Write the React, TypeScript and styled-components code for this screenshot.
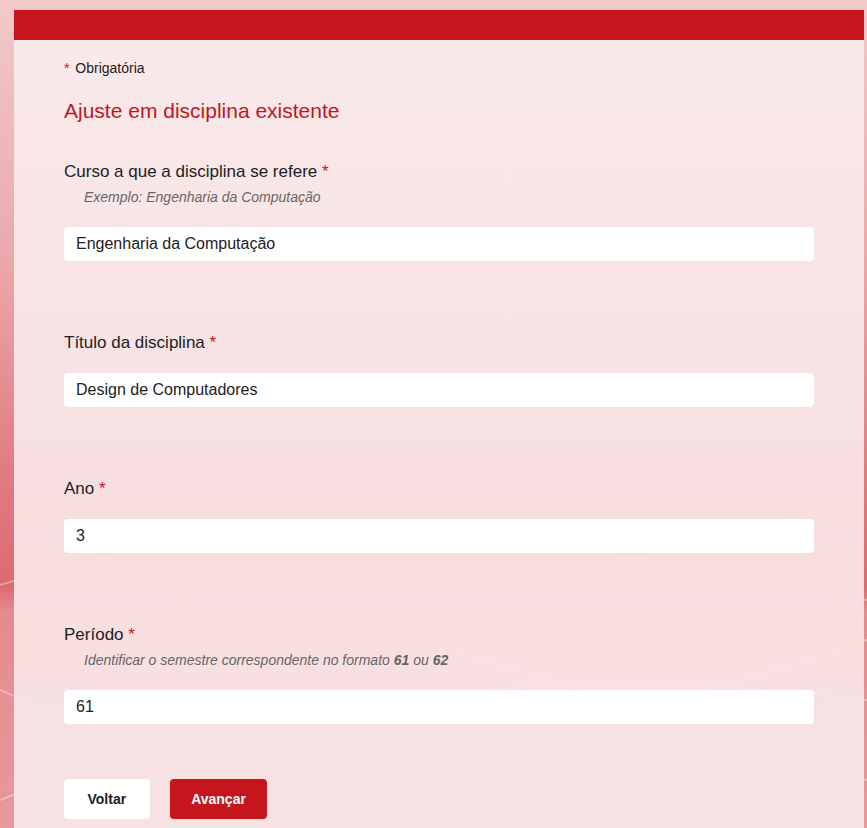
import React from "react";
import styled, { createGlobalStyle } from "styled-components";

const GlobalStyle = createGlobalStyle`
  html, body { margin: 0; padding: 0; }
  body {
    font-family: "Liberation Sans", Arial, sans-serif;
    background: linear-gradient(180deg, #f2c9ca 0%, #eba9ac 30%, #e07d82 55%, #dc6b71 69%, #e48b8f 72%, #e79a9d 100%);
    min-height: 828px;
    overflow: hidden;
  }
`;

const Page = styled.div`
  position: relative;
  padding: 10px 3px 0 14px;
  min-height: 818px;
`;

const Waves = styled.svg`
  position: absolute;
  inset: 0;
  width: 100%;
  height: 828px;
  pointer-events: none;
`;

const Card = styled.main`
  position: relative;
  width: 850px;
  min-height: 840px;
  background: linear-gradient(180deg, rgba(250, 235, 236, 0.96) 0%, rgba(248, 228, 229, 0.94) 65%, rgba(249, 230, 231, 0.94) 100%);
`;

const HeaderBar = styled.div`
  height: 30px;
  background: #c5161d;
`;

const Body = styled.div`
  padding: 20px 50px 0 50px;
  display: flex;
  flex-direction: column;
`;

const Required = styled.div`
  font-size: 14px;
  line-height: 16px;
  color: #202124;
  word-spacing: 2px;
`;

const Star = styled.span`
  color: #c5161d;
`;

const Title = styled.h1`
  margin: 23px 0 38px;
  font-size: 21px;
  line-height: 24px;
  font-weight: 400;
  color: #c0161d;
`;

const Question = styled.section`
  display: flex;
  flex-direction: column;
  margin-bottom: 71px;
`;

const Label = styled.label`
  font-size: 17px;
  line-height: 21px;
  color: #202124;
  margin-bottom: 20px;
`;

const Help = styled.div`
  font-size: 14px;
  line-height: 20px;
  font-style: italic;
  color: #666;
  padding-left: 20px;
  margin: -15px 0 20px;

  b { font-weight: 700; }
`;

const Input = styled.input`
  box-sizing: border-box;
  width: 750px;
  height: 34px;
  border: none;
  border-radius: 4px;
  background: #fff;
  padding: 0 12px;
  font-family: "Liberation Sans", Arial, sans-serif;
  font-size: 16px;
  color: #202124;
  outline: none;
`;

const Actions = styled.div`
  display: flex;
  gap: 20px;
  margin-top: -16px;
`;

const Button = styled.button<{ $primary?: boolean }>`
  height: 40px;
  padding: 0 ${(p) => (p.$primary ? "21.5px" : "23.5px")};
  border: none;
  border-radius: 4px;
  font-family: "Liberation Sans", Arial, sans-serif;
  font-size: 14px;
  font-weight: 700;
  background: ${(p) => (p.$primary ? "#c5161d" : "#ffffff")};
  color: ${(p) => (p.$primary ? "#ffffff" : "#202124")};
  cursor: pointer;
`;

type Q = { label: string; help?: React.ReactNode; value: string };

const questions: Q[] = [
  { label: "Curso a que a disciplina se refere", help: "Exemplo: Engenharia da Computação", value: "Engenharia da Computação" },
  { label: "Título da disciplina", value: "Design de Computadores" },
  { label: "Ano", value: "3" },
  {
    label: "Período",
    help: (
      <>
        Identificar o semestre correspondente no formato <b>61</b> ou <b>62</b>
      </>
    ),
    value: "61",
  },
];

export default function App() {
  return (
    <>
      <GlobalStyle />
      <Page>
        <Waves viewBox="0 0 867 828" preserveAspectRatio="none">
          <g fill="none" stroke="#ffffff" strokeWidth="2" opacity="0.35">
            <path d="M0 585 C 200 520, 500 520, 867 600" />
            <path d="M0 690 C 150 760, 400 800, 867 640" />
            <path d="M120 590 C 350 600, 600 700, 867 780" />
            <path d="M0 800 C 250 700, 550 660, 867 700" />
          </g>
        </Waves>
        <Card>
          <HeaderBar />
          <Body>
            <Required>
              <Star>*</Star> Obrigatória
            </Required>
            <Title>Ajuste em disciplina existente</Title>
            {questions.map((q) => (
              <Question key={q.label}>
                <Label>
                  {q.label} <Star>*</Star>
                </Label>
                {q.help && <Help>{q.help}</Help>}
                <Input defaultValue={q.value} />
              </Question>
            ))}
            <Actions>
              <Button>Voltar</Button>
              <Button $primary>Avançar</Button>
            </Actions>
          </Body>
        </Card>
      </Page>
    </>
  );
}
